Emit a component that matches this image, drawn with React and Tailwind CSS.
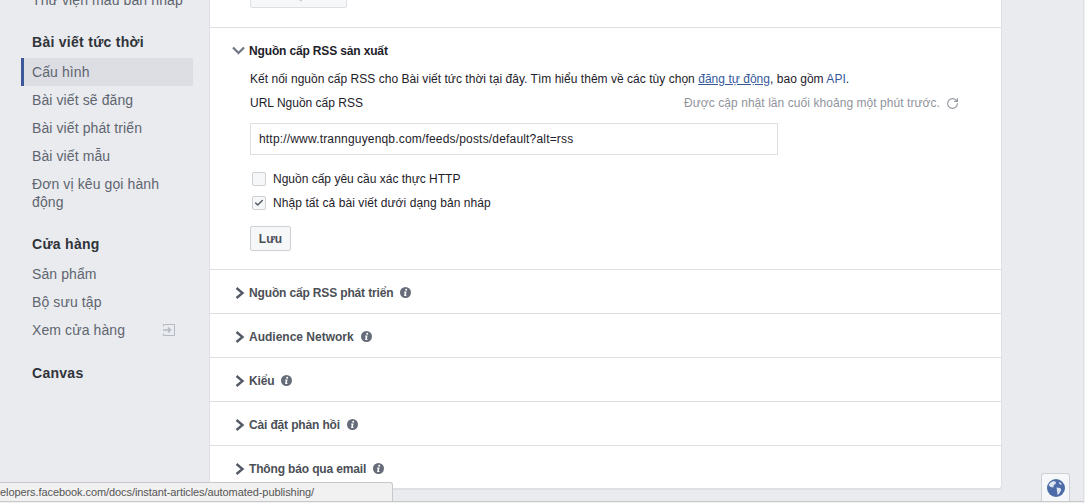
import { Check, RotateCw } from 'lucide-react';

const FONT = "font-['Liberation_Sans',Arial,sans-serif]";

function ArrowRight() {
  return (
    <svg width="10" height="12" viewBox="0 0 10 12" fill="none" stroke="#555b66" strokeWidth="2.400" className="mr-[4px] ml-[3px] shrink-0">
      <path d="M1.500 1l6 5-6 5" />
    </svg>
  );
}

function ArrowDown() {
  return (
    <svg width="13" height="9" viewBox="0 0 13 9" fill="none" stroke="#6d7380" strokeWidth="2.200" className="mr-[4px] shrink-0">
      <path d="M1 1.500l5.500 5.500 5.500-5.500" />
    </svg>
  );
}

function InfoIcon() {
  return (
    <svg width="11" height="11" viewBox="0 0 11 11" className="shrink-0">
      <circle cx="5.500" cy="5.500" r="5.500" fill="#666c79" />
      <circle cx="6.200" cy="2.800" r="1" fill="#fff" />
      <path d="M4.200 4.600h2.300L5.900 8.200h.8l-.2.8H4.100l.6-3.600h-.7z" fill="#fff" />
    </svg>
  );
}

function GlobeIcon() {
  return (
    <svg width="18" height="18" viewBox="0 0 17 17">
      <circle cx="8.500" cy="8.500" r="8.500" fill="#4c6ba8" />
      <path d="M3 3.500l3-1.500 2.500.8L8 5 6.500 5.500 6 8 3.500 7.500 1.500 6z" fill="#dfe5f0" />
      <path d="M9 8l3.500.5 1 2-2 3.500-1.500 1L9.500 11.500z" fill="#dfe5f0" />
      <path d="M11 2.500l2.500 1.500.5 1.500-2-.5z" fill="#dfe5f0" />
    </svg>
  );
}

function ExitIcon() {
  return (
    <svg width="14" height="14" viewBox="0 0 14 14" fill="none" stroke="#b4b9c3" strokeWidth="1">
      <path d="M1.500 3.500v-2h11v11h-11v-2" />
      <path d="M1 7h7M6 4.500L8.500 7 6 9.500" strokeWidth="1.500" />
    </svg>
  );
}

function SideHeading({ children, className = '' }) {
  return (
    <div className={`-ml-[21px] pl-[32px] text-[14px] leading-[18px] font-bold tracking-[0.28px] text-[#30333a] ${className}`}>
      {children}
    </div>
  );
}

function SideItem({ children, active = false, icon = null }) {
  return (
    <div
      className={`flex w-[172px] items-center justify-between border-l-[3px] py-[5px] pl-[8px] pr-[17px] text-[14px] leading-[18px] tracking-[0.1px] text-[#5f6570] ${
        active ? 'border-[#3b5998] bg-[#dcdee3]' : 'border-transparent'
      }`}
    >
      <span>{children}</span>
      {icon}
    </div>
  );
}

function Section({ title, spacing = 'tracking-[-0.15px]' }) {
  return (
    <div className="flex h-[44px] items-center border-b border-[#dddfe2] pl-[22px] pt-[2px]">
      <ArrowRight />
      <span className={`mr-[7px] text-[12px] font-bold text-[#4b4f56] ${spacing}`}>{title}</span>
      <InfoIcon />
    </div>
  );
}

export default function App() {
  return (
    <div className={`${FONT} relative flex h-[503px] w-[1085px] overflow-hidden bg-[#e9ebee]`}>
      {/* left nav */}
      <aside className="w-[210px] shrink-0 border-r border-[#dddfe2] pl-[21px]">
        <div className="-mt-[9px] -ml-[21px] pl-[32px] text-[14px] leading-[18px] tracking-[0.1px] text-[#5f6570]">
          Thư viện mẫu bản nháp
        </div>
        <SideHeading className="mt-[24px] mb-[7px]">Bài viết tức thời</SideHeading>
        <SideItem active>Cấu hình</SideItem>
        <SideItem>Bài viết sẽ đăng</SideItem>
        <SideItem>Bài viết phát triển</SideItem>
        <SideItem>Bài viết mẫu</SideItem>
        <SideItem>Đơn vị kêu gọi hành động</SideItem>
        <SideHeading className="mt-[19px] mb-[7px]">Cửa hàng</SideHeading>
        <SideItem>Sản phẩm</SideItem>
        <SideItem>Bộ sưu tập</SideItem>
        <SideItem icon={<ExitIcon />}>Xem cửa hàng</SideItem>
        <SideHeading className="mt-[20px]">Canvas</SideHeading>
      </aside>

      {/* main card */}
      <main className="h-[489px] w-[792px] shrink-0 rounded-br-[3px] border-r border-b border-[#dddfe2] bg-white text-[12px] text-[#1d2129]">
        <div className="h-[28px] overflow-hidden border-b border-[#dddfe2] pl-[40px]">
          <div className="-mt-[16px] flex h-[24px] w-[97px] items-end justify-center rounded-b-[2px] border border-[#dddfe2] bg-[#f6f7f9] pb-[5px] text-[12px] leading-[14px] font-bold text-[#bcc0c9]">
            Xác nhận URL
          </div>
        </div>

        <div className="h-[242px] border-b border-[#dddfe2] pl-[22px] pt-[14px]">
          <div className="flex h-[17px] items-center">
            <ArrowDown />
            <span className="font-bold tracking-[-0.15px] text-[#1d2129]">Nguồn cấp RSS sản xuất</span>
          </div>
          <div className="pl-[18px]">
            <p className="mt-[12px] leading-[16px] tracking-[0.03px]">
              Kết nối nguồn cấp RSS cho Bài viết tức thời tại đây. Tìm hiểu thêm về các tùy chọn{' '}
              <span className="text-[#365899] underline">đăng tự động</span>, bao gồm{' '}
              <span className="text-[#365899]">API</span>.
            </p>
            <div className="mt-[8px] flex w-[709px] items-center justify-between leading-[16px]">
              <span>URL Nguồn cấp RSS</span>
              <span className="flex items-center gap-[6px] tracking-[0.06px] text-[#90949c]">
                Được cập nhật lần cuối khoảng một phút trước.
                <RotateCw size={13} strokeWidth={2} />
              </span>
            </div>
            <div className="mt-[12px] flex h-[32px] w-[528px] items-center border border-[#dddfe2] pl-[8px] tracking-[0.18px]">
              http://www.trannguyenqb.com/feeds/posts/default?alt=rss
            </div>
            <label className="mt-[16px] flex h-[16px] items-center pl-[2px]">
              <span className="mr-[7px] h-[14px] w-[14px] rounded-[2px] border border-[#ced0d4] bg-[#f6f7f9]" />
              Nguồn cấp yêu cầu xác thực HTTP
            </label>
            <label className="mt-[8px] flex h-[16px] items-center pl-[2px] tracking-[0.08px]">
              <span className="mr-[7px] flex h-[14px] w-[14px] items-center justify-center rounded-[2px] border border-[#ced0d4] bg-[#f6f7f9]">
                <Check size={10} strokeWidth={3.500} className="text-[#555b66]" />
              </span>
              Nhập tất cả bài viết dưới dạng bản nháp
            </label>
            <button className="mt-[15px] h-[25px] w-[41px] rounded-[2px] border border-[#ced0d4] bg-[#f6f7f9] text-[12px] font-bold text-[#4b4f56]">
              Lưu
            </button>
          </div>
        </div>

        <Section title="Nguồn cấp RSS phát triển" />
        <Section title="Audience Network" spacing="tracking-normal" />
        <Section title="Kiểu" />
        <Section title="Cài đặt phản hồi" />
        <Section title="Thông báo qua email" />
      </main>

      {/* locale button */}
      <div className="absolute bottom-[2px] left-[1041px] flex h-[28px] w-[29px] items-center justify-center rounded-t-[3px] border border-b-0 border-[#ced0d4] bg-[#f6f7f9]">
        <GlobeIcon />
      </div>

      {/* browser status bar */}
      <div className="absolute bottom-[2px] left-0 flex h-[19px] w-[393px] items-center rounded-tr-[3px] border-t border-r border-[#c8c8c8] bg-[#f1f1f1] text-[11px] tracking-[-0.08px] text-[#555]">
        elopers.facebook.com/docs/instant-articles/automated-publishing/
      </div>
      <div className="absolute bottom-0 left-0 h-[2px] w-full border-t border-[#c8c8c8] bg-[#f1f1f1]" />
      <div className="absolute top-0 right-0 h-full w-[2px] border-l border-[#dddfe2] bg-[#f1f1f1]" />
    </div>
  );
}
